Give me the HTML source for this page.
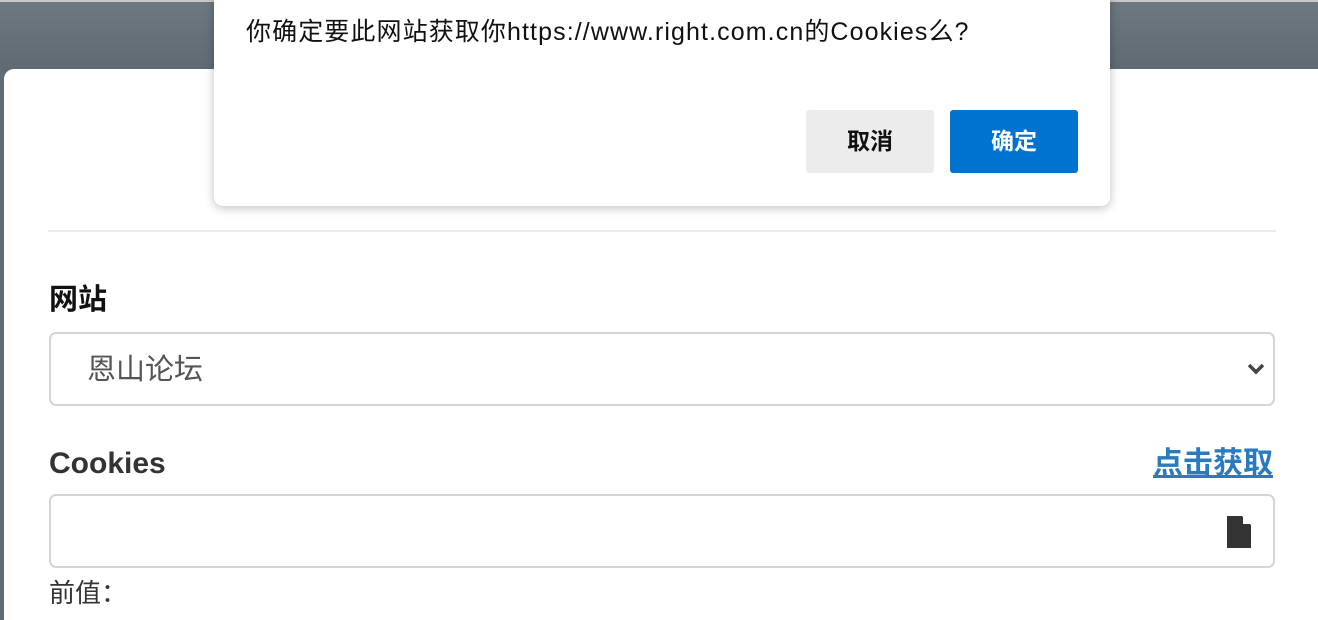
<!DOCTYPE html>
<html><head><meta charset="utf-8"><style>
html,body{margin:0;width:1318px;height:620px;overflow:hidden}
body{position:relative;font-family:"Liberation Sans","Noto Sans CJK SC",sans-serif;background:#5f6b75;}
.top{position:absolute;left:0;top:0;width:1318px;height:70px;background:linear-gradient(#6d7881,#5f6a73);border-top:2px solid #c9c9c9;box-sizing:border-box}
.card{position:absolute;left:4px;top:69px;width:1330px;height:560px;background:#fff;border-radius:10px}
.hr{position:absolute;left:48px;top:230px;width:1228px;height:2px;background:#ebebeb}
.lbl{position:absolute;font-weight:bold;color:#222;line-height:1}
.box{position:absolute;left:49px;width:1222px;border:2px solid #d4d4d4;border-radius:7px;background:#fff}
.dlg{position:absolute;left:214px;top:-10px;width:896px;height:216px;background:#fff;border-radius:9px;box-shadow:0 2px 10px rgba(0,0,0,.25)}
.btn{position:absolute;top:120px;width:128px;height:63px;border-radius:3px;font-size:23px;font-weight:bold;text-align:center;line-height:63px}
</style></head><body>
<div class="top"></div>
<div class="card"></div>
<div class="hr"></div>
<div class="lbl" style="left:49px;top:286px;font-size:29px;color:#111">网站</div>
<div class="box" style="top:332px;height:70px"><span style="position:absolute;left:36px;top:22px;font-size:29px;line-height:1;color:#555">恩山论坛</span>
<svg style="position:absolute;right:8px;top:29px" width="18" height="12" viewBox="0 0 18 12"><path d="M2 2 L9 9 L16 2" stroke="#444" stroke-width="3.5" fill="none"/></svg></div>
<div class="lbl" style="left:49px;top:449px;font-size:30px;color:#333">Cookies</div>
<div style="position:absolute;left:1153px;top:449px;font-size:30px;line-height:1;font-weight:bold;color:#2a7ac0;text-decoration:underline">点击获取</div>
<div class="box" style="top:494px;height:70px">
<svg style="position:absolute;left:1176px;top:20px" width="24" height="32" viewBox="0 0 24 32"><path d="M0 0 H15 L24 9 V32 H0 Z" fill="#333"/><path d="M16 0 L24 8 H16 Z" fill="#fff"/></svg></div>
<div style="position:absolute;left:49px;top:580px;font-size:26px;line-height:1;color:#333">前值：</div>
<div class="dlg">
<div style="position:absolute;left:32px;top:30px;font-size:25px;line-height:1;color:#111;white-space:nowrap;letter-spacing:1.1px">你确定要此网站获取你https://www.right.com.cn的Cookies么?</div>
<div class="btn" style="left:592px;background:#ececec;color:#111">取消</div>
<div class="btn" style="left:736px;background:#0073d1;color:#fff">确定</div>
</div>
</body></html>
